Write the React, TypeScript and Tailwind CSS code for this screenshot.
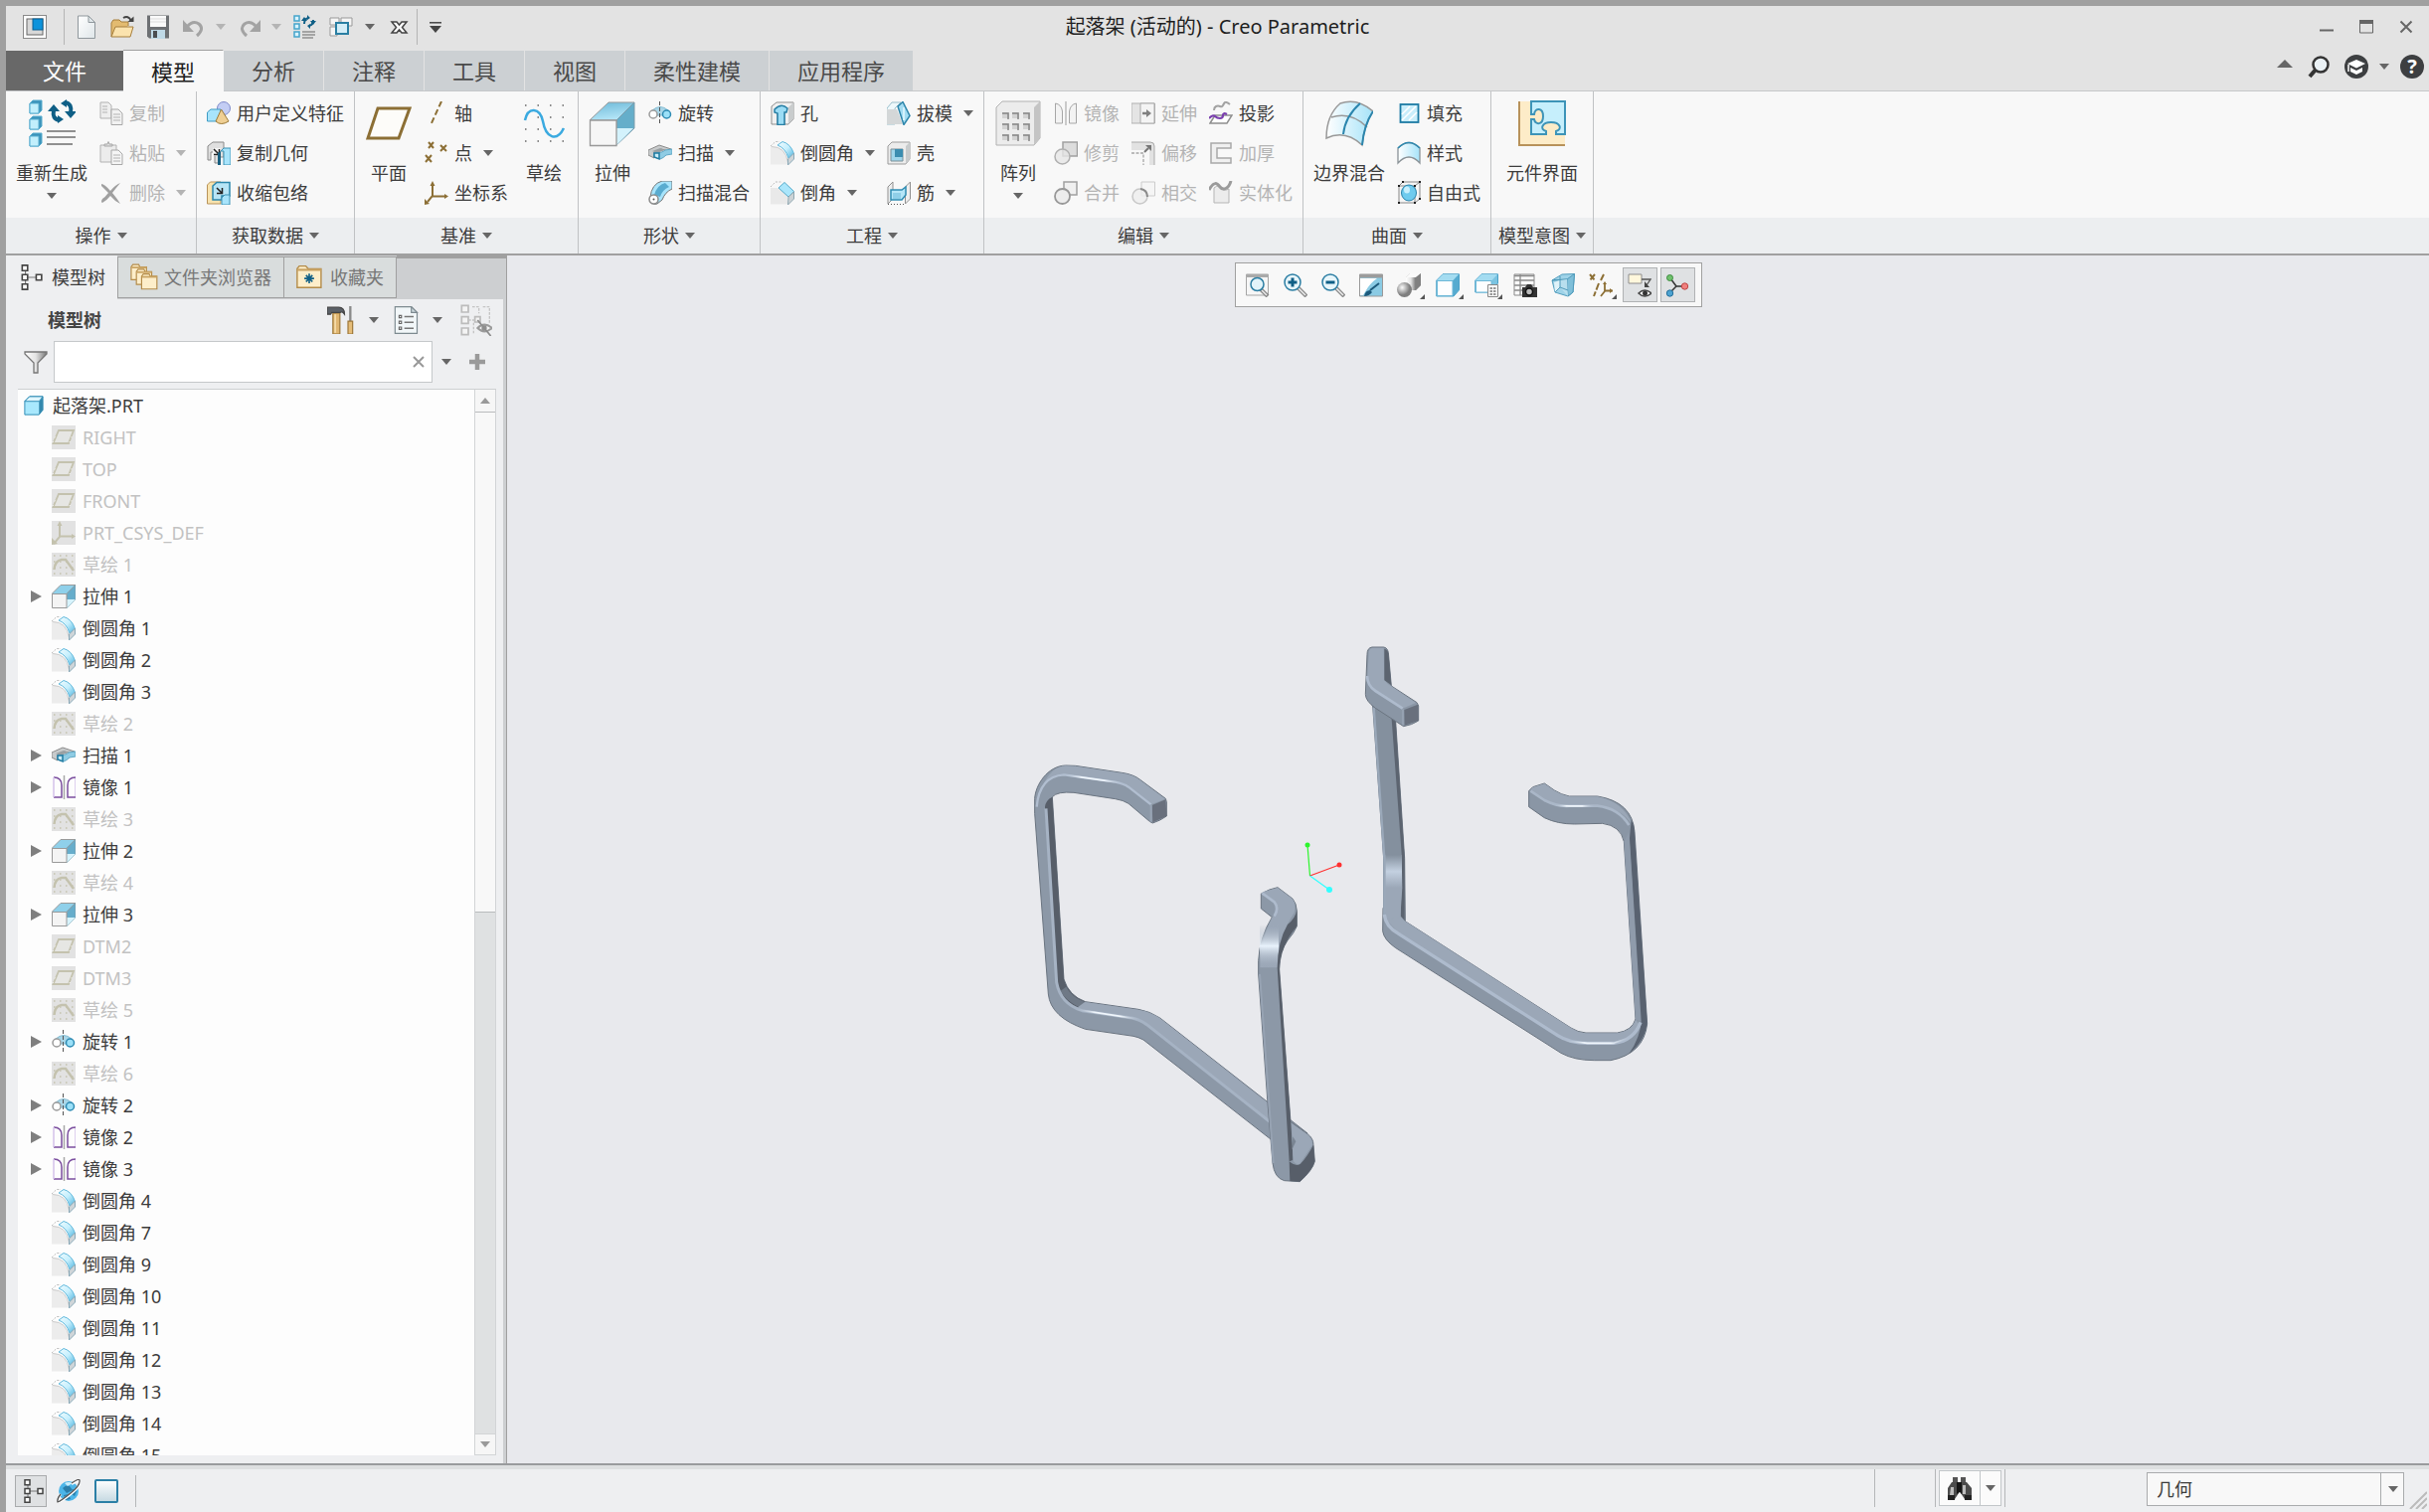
import type { ReactNode } from "react";

const cyan = "#a8e4fb";
const blue = "#3f9cc4";
const teal = "#0f5f86";
const brown = "#8c6f35";
const gray = "#b2b2b2";

const smallIcons: Record<string, ReactNode> = {
  app: (
    <>
      <rect x="0.5" y="0.5" width="23" height="23" fill="#fff" stroke="#8a8a8a" />
      <rect x="4" y="4" width="16" height="16" fill="#d8d8d8" stroke="#666" />
      <rect x="10" y="4" width="10" height="11" fill="#0c93dc" stroke="#0a5f91" />
    </>
  ),
  newFile: (
    <>
      <path d="M3.5 1H14l6.500 6.500V23.500H3.500z" fill="url(#paper)" stroke="#8f979c" />
      <path d="M14 1v6.500h6.500z" fill="#dfe6e9" stroke="#8f979c" />
    </>
  ),
  open: (
    <>
      <path d="M1 22V8l2-3h6l2 2h7v4" fill="#e3bb70" stroke="#a67e3c" />
      <path d="M1 22 5 12h18l-3 10z" fill="#fbe3ae" stroke="#a67e3c" />
      <path d="M13 3q5-3 8 3" fill="none" stroke="#444" strokeWidth="2" />
      <path d="M17.500 7h6V1.500z" fill="#444" />
    </>
  ),
  save: (
    <>
      <path d="M1 .5h22v23H3l-2-2z" fill="#6d7073" />
      <rect x="4" y="1" width="16" height="11" fill="#fafafa" />
      <path d="M4 4h16M4 7h16" stroke="#ddd" />
      <rect x="5" y="15" width="14" height="9" fill="#bfd9e6" />
      <rect x="7" y="16" width="4" height="7" fill="#4a4d50" />
    </>
  ),
  undo: (
    <>
      <path d="M5 12q6-7 12-3 6 5-2 12" fill="none" stroke="#a3a3a3" strokeWidth="3" />
      <path d="M1 5v12h11z" fill="#a3a3a3" />
    </>
  ),
  redo: (
    <>
      <path d="M19 12q-6-7-12-3-6 5 2 12" fill="none" stroke="#a3a3a3" strokeWidth="3" />
      <path d="M23 5v12H12z" fill="#a3a3a3" />
    </>
  ),
  regen: (
    <>
      {[1, 9, 17].map((y) => (
        <rect key={y} x="1" y={y} width="5" height="5" fill="#d9f3fd" stroke="#45a5cb" strokeWidth="1.5" />
      ))}
      <path d="M11 9q0-5 4-6M20 5q0 5-4 6" fill="none" stroke={teal} strokeWidth="2" />
      <path d="M8 6h6l-3-4zM17 6h6l-3 4zM14 0v5l3-2zM17 9v5l-3-3z" fill={teal} />
      <path d="M9 17h13M9 20h13M9 23h11" stroke="#909090" strokeWidth="1.5" />
    </>
  ),
  windows: (
    <>
      <path d="M1 3h9v7H1zM12 3h11v8H12zM1 12h7v9H1z" fill="#f5f5f5" stroke="#999" />
      <rect x="7" y="8" width="12" height="11" fill="#d5eef8" stroke="#2a7fa3" strokeWidth="2" />
    </>
  ),
  closeWin: (
    <path d="M5 7h5l2.500 3L15 7h5l-4.500 5.500L20 18h-5l-2.500-3-2.500 3H5l4.500-5.500z" fill="#fafafa" stroke="#444" strokeWidth="1.5" />
  ),
  copy: (
    <>
      <path d="M1 1h8l3 3v13H1z" fill="#eee" stroke={gray} />
      <path d="M3 5h5M3 8h5M3 11h5" stroke={gray} />
      <path d="M12 8h7l4 4v11.500H12z" fill="#f2f2f2" stroke="#a8a8a8" />
      <path d="M14 13h7M14 16h7M14 19h7" stroke={gray} />
    </>
  ),
  paste: (
    <>
      <path d="M1 4h16v17H1z" fill="#ececec" stroke={gray} />
      <path d="M5 5V3h3l1-2.500L10 3h3v2z" fill="#ddd" stroke="#a8a8a8" />
      <path d="M12 9h7l4 4v10.500H12z" fill="#f5f5f5" stroke="#a8a8a8" />
      <path d="M14 14h7M14 17h7M14 20h7" stroke={gray} />
    </>
  ),
  remove: (
    <path d="M2 3Q5 3 11 10 16 4 21 2 16 8 13 12 18 18 21 23 15 20 11 15 7 20 3 22 1 21 3 18 6 16 9 12 5 8 2 5z" fill="#a0a0a0" />
  ),
  udf: (
    <>
      <circle cx="17" cy="7" r="6.5" fill="#c3cdf4" stroke="#7f8bc9" />
      <path d="M.5 11 4 8h10v12H.5z" fill={cyan} stroke={blue} />
      <path d="M14.500 8 9 20q5 5 13 0z" fill="#efcf94" stroke="#9c7a38" />
    </>
  ),
  copyGeom: (
    <>
      <path d="m1 5 5-4h11v15H12v6H8V11H4v8H1z" fill="#e0e0e0" stroke="#8a8a8a" />
      <path d="M6 7h8v8H6z" fill="#f4f4f4" />
      <path d="m7 8 5 5m.5-5v5.500H7" stroke="#222" strokeWidth="1.5" fill="none" />
      <path d="m11 12 3-2v14h-3z" fill="#185f80" />
      <path d="m14 10 3-3h7v17H17V10z" fill={cyan} stroke="#3c92b5" />
    </>
  ),
  shrink: (
    <>
      <path d="m.5 4 3-3H14v22H.5z" fill="#f8e3ae" stroke="#b8935a" />
      <path d="m6 5 4-3.500h13V15h-8v4H6z" fill="#b7e5f6" stroke="#2b87ac" strokeWidth="1.5" />
      <path d="m10 7 5 5m.5-5v5.500H10" stroke="#222" strokeWidth="1.5" fill="none" />
      <path d="m15 17 3-3h5v10h-8z" fill={cyan} stroke="#3c92b5" />
    </>
  ),
  axis: <path d="M17 0 6 24" stroke={brown} strokeWidth="2" strokeDasharray="6 3" />,
  points: <path d="m4 1 5 6m0-6L4 7m12-3 6 6m0-6-6 6M1 14l6 7m0-7-6 7" stroke={brown} strokeWidth="2" />,
  csys: (
    <>
      <path d="M8 4v11L3 21M8 15.500h13" stroke={brown} strokeWidth="2" fill="none" />
      <path d="M5.500 5h5L8 0zM20 13v5l4-2.500zM0 24v-6l5 5z" fill={brown} />
    </>
  ),
  revolve: (
    <>
      <path d="M4 9Q12 2 20 9v5H4z" fill="#a9d6e8" stroke="#84bcd3" />
      <circle cx="5" cy="13" r="4" fill="#fff" stroke="#9a9a9a" strokeWidth="1.5" />
      <circle cx="18.5" cy="13" r="4" fill="#9be0f8" stroke="#2e8bb3" strokeWidth="1.5" />
      <path d="M11.500 0v24" stroke="#555" strokeDasharray="4 2" />
    </>
  ),
  sweep: (
    <>
      <path d="M0 9 11 4l12 4-2 2-8-2-7 3v6l-6-3z" fill="#c8cbcc" stroke="#8b8b8b" />
      <path d="m4 10 8-3 5 2-8 3z" fill="#9aa0a3" />
      <path d="M6 12q8 0 11-3l7-1v5l-6 1q-3 3-6 4l-6-2z" fill="#8fcce4" stroke="#61a8c5" />
      <path d="M6 12h5v6L6 16z" fill="#c9ecf8" stroke="#1f7ba1" strokeWidth="1.5" />
    </>
  ),
  blend: (
    <>
      <path d="M2 17Q3 3 14 0h10v8q-7 3-10 11l-5 4q-6 2-7-6z" fill={cyan} stroke="#777" />
      <path d="M6 14Q9 4 17 2l4 4Q14 9 12 16z" fill="#59acd0" />
      <circle cx="5.5" cy="18.5" r="4.5" fill="#fff" stroke="#8c8c8c" strokeWidth="1.5" />
      <circle cx="5.5" cy="18.5" r="1" fill="#555" />
    </>
  ),
  hole: (
    <>
      <path d="m1 5 5-4h17v17l-5 5h-4V11H7v12H1z" fill="#f0f0f0" stroke="#8f8f8f" />
      <path d="M18 6v17l5-5V1z" fill="#c9cccd" />
      <path d="M4 8q7-7 13-1l-1 4h-2v12.500H7V12L4 11z" fill="#9bdcf5" stroke="#277fa5" strokeWidth="1.5" />
    </>
  ),
  round: (
    <>
      <path d="M0 5h2q13 2 16 18.500H0z" fill="#ececec" />
      <path d="M0 5 5 .5h4" fill="none" stroke="#bbb" strokeDasharray="2 1.5" />
      <path d="M1 5.500q14 0 16.500 16" fill="none" stroke="#ccc" />
      <path d="M7 4 12 .5q8 2 11.500 12L18 17Q15 7 7 4z" fill="url(#sheen)" stroke="#62b9dc" />
      <path d="m17.500 18 6-6v6l-6 6z" fill="#cfd5d8" stroke="#8aa9b8" />
    </>
  ),
  chamfer: (
    <>
      <path d="M0 7h9l8 8v8.500H0z" fill="#e9e9e9" />
      <path d="M0 6 5 1h7" fill="none" stroke="#bbb" strokeDasharray="2 1.5" />
      <path d="m8 7 6-5.500 9.500 9L18 16z" fill="#abe6fb" stroke="#55aaca" />
      <path d="m18 16 5.500-5v7l-6 6z" fill="#cdd3d6" stroke="#8fa7b1" />
    </>
  ),
  draft: (
    <>
      <path d="M0 7 5 1h9L8 7v16H0z" fill="#eef8fb" stroke="#9abfcc" />
      <path d="M0 8h10l6 15H0z" fill="#d4d7d8" />
      <path d="M11 5 16 .5l7 14-6 9z" fill="#a3dcf2" stroke="#2e86ab" strokeWidth="1.5" />
      <path d="M17 6v13" stroke="#d4f2fc" strokeWidth="2" />
    </>
  ),
  shell: (
    <>
      <path d="m1 5 4-4h18v17l-4 5H1z" fill="#ececec" stroke="#9b9b9b" />
      <path d="M19 5v18l4-5V1z" fill="#c8cbcc" />
      <path d="M4 8h12v12H4z" fill="#9fd5ea" stroke="#7b8f98" />
      <path d="M8 8h8v8H8z" fill="#3a8db0" />
    </>
  ),
  rib: (
    <>
      <path d="m1 6 5-5v17l-5 5zM23.500 1l-5 5v17l5-5z" fill="#eee" stroke="#909090" />
      <path d="M1 23.500h17" stroke="#555" strokeDasharray="1 2" />
      <path d="M4 9h11l4-3v8l-4 5H4z" fill="#b5e6f8" stroke="#308db3" strokeWidth="1.5" />
      <path d="M6 12h8v6H6z" fill="#8fcfe8" />
    </>
  ),
  mirrorOff: (
    <>
      <path d="M12 0v24" stroke="#bbb" strokeWidth="1.5" />
      <path d="M1.500 2q6 1 7 8v12h-7zM22.500 2q-6 1-7 8v12h7z" fill="#f3f3f3" stroke="#a6a6a6" />
    </>
  ),
  mirror: (
    <>
      <path d="M12.500 0v24" stroke="#a8a8a8" strokeWidth="1.5" />
      <path d="M2 2q8 0 8 8v12H2" fill="none" stroke="#7b4e9e" strokeWidth="1.5" />
      <path d="M2 2v20M24 2v20" stroke="#d3c2ea" strokeWidth="1.5" />
      <path d="M24 2q-8 0-8 8v12h8" fill="none" stroke="#7b4e9e" strokeWidth="1.5" />
    </>
  ),
  trim: (
    <>
      <path d="M9 1h14.500v14H9z" fill="#ddd" stroke="#a0a0a0" strokeWidth="1.5" />
      <circle cx="8.5" cy="15.5" r="7.5" fill="#e6e6e6" fillOpacity=".8" stroke="#b0b0b0" strokeWidth="1.5" />
    </>
  ),
  merge: (
    <>
      <path d="M10 1h13v13h-7Q15 9 10 8z" fill="#f0f0f0" stroke="#a0a0a0" strokeWidth="1.5" />
      <circle cx="8.5" cy="15.5" r="7.5" fill="#ededed" stroke="#989898" strokeWidth="1.8" />
    </>
  ),
  intersect: (
    <>
      <path d="M10 1h13.500v14H10z" fill="#f5f5f5" stroke="#ccc" />
      <circle cx="8.5" cy="15.5" r="7.5" fill="#eee" fillOpacity=".8" stroke="#c8c8c8" strokeWidth="1.5" />
      <path d="M9 8q7 1 7 8" fill="none" stroke="#8a8a8a" strokeWidth="2" />
    </>
  ),
  extend: (
    <>
      <path d="M0 2h23.500v20H0z" fill="#e4e4e4" stroke="#b0b0b0" />
      <path d="M9 2h14v20H9z" fill="#f4f4f4" stroke="#aaa" />
      <path d="M11 12h6" stroke="#808080" strokeWidth="2.5" />
      <path d="m15 8 5 4-5 4z" fill="#808080" />
    </>
  ),
  offset: (
    <>
      <path d="M0 1h20q3 0 3 3v20h-5V9H0z" fill="#e2e2e2" />
      <path d="M0 1h19q4 0 4 4v19" fill="none" stroke="#aaa" />
      <path d="M0 12h12v12" fill="none" stroke="#a5a5a5" strokeWidth="1.3" strokeDasharray="3 1.5" />
      <path d="m13 11 4-4" stroke="#777" strokeWidth="2" />
      <path d="M14 4h6v6z" fill="#777" />
    </>
  ),
  project: (
    <>
      <path d="M5 9q0-3 2-4t4 0 3-1 2-3 5 2" fill="none" stroke="#a3a3a3" strokeWidth="2" />
      <path d="m1 22 5-8h17l-5 8z" fill="#fff" stroke="#8f8f8f" strokeWidth="1.5" />
      <path d="M0 17q4-4 6-2t5 2 3-3 4-1" fill="none" stroke="#7a3fae" strokeWidth="2.2" />
    </>
  ),
  thicken: <path d="M2 2h20v5H8v10h14v5H2z" fill="#f0f0f0" stroke="#a8a8a8" strokeWidth="1.5" />,
  solidify: (
    <>
      <path d="M5 7q5-4 7 0t8 1v14H5z" fill="#ececec" stroke="#b5b5b5" />
      <path d="M0 9C5 0 8 2 11 6S20 8 22 0" fill="none" stroke="#9b9b9b" strokeWidth="3" />
    </>
  ),
  fill: (
    <>
      <rect x="3.5" y="3" width="18" height="18" fill="#c9eefb" stroke="#1d7ba4" strokeWidth="1.8" />
      <path d="m5 13 8-8M5 19 19 5M12 19l8-8" stroke="#fff" strokeWidth="1.5" />
    </>
  ),
  style: (
    <>
      <path d="M1 7Q12-4 23 7v15Q12 10 1 22z" fill="url(#sheenH)" stroke="#8a9297" strokeWidth="1.3" />
      <path d="M1 7Q12-4 23 7" fill="none" stroke="#2b89b1" strokeWidth="1.5" />
    </>
  ),
  freestyle: (
    <>
      <path d="M2 5h16v17H2zM2 5l4-4h17l-5 4M23 1v17l-5 4" fill="#f5f5f5" stroke="#888" />
      <ellipse cx="12" cy="12" rx="7.5" ry="8" fill="#6fcbee" stroke="#2a83ab" />
      <ellipse cx="10" cy="9" rx="3" ry="3.5" fill="#c8effc" />
      <path d="M1 4h2v2H1zM17 4h2v2h-2zM5 0h2v2H5zM22 0h2v2h-2zM1 21h2v2H1zM17 21h2v2h-2zM22 17h2v2h-2z" fill="#222" />
    </>
  ),
  modelTree: (
    <>
      <path d="M7 5v14M7 12h10" stroke="#777" />
      <path d="M4 .8h5v5H4zM4 9.500h5v5H4zM4 18.200h5v5H4zM17 9.500h5v5h-5z" fill="#fff" stroke="#444" strokeWidth="1.5" />
    </>
  ),
  part: (
    <>
      <path d="m3 7 5-5h14v14l-4 5H3z" fill="#a8e8fd" stroke="#2f8cb5" />
      <path d="M18 7 22 2v14l-4 5z" fill="#3489ae" />
      <path d="m3 7 5-5h14l-4 5z" fill="#e0f6fd" stroke="#2f8cb5" />
    </>
  ),
  extrude: (
    <>
      <path d="M0 9.500 9 .5h15L15 9.500z" fill="#8fd0ea" stroke="#9a9a9a" />
      <path d="m15 9.500 9-9V15l-9 9z" fill="#66adcb" stroke="#7b9cab" />
      <path d="m15 24 9-9h-9z" fill="#d6f3fc" />
      <path d="M.5 9.500h14.500v14H.5z" fill="#f4f4f4" stroke="#9a9a9a" />
    </>
  ),
  plane: (
    <>
      <path d="M0 0h24v24H0z" fill="#e2e2e2" />
      <path d="M7 5h15l-5 13H1.500z" fill="#e6e6e3" stroke="#c4c2ae" strokeWidth="1.8" />
      <path d="M1 17l4-9M18 17l3-8" stroke="#fff" strokeDasharray="1 4" />
    </>
  ),
  csysOff: (
    <>
      <path d="M0 0h24v24H0z" fill="#e2e2e2" />
      <path d="M8 3v13l-6 7M8 15.500h14" stroke="#c4c2ae" strokeWidth="2" fill="none" />
      <path d="M5.500 5h5L8 0zM20 13v5l4-2.500zM0 24v-7l6 6z" fill="#c4c2ae" />
    </>
  ),
  sketchOff: (
    <>
      <path d="M0 0h24v24H0z" fill="#e2e2e2" />
      {[3, 9, 15, 21].map((y) => (
        <path key={y} d={`M2 ${y}h21`} stroke="#c4c2ae" strokeWidth="1.5" strokeDasharray="1.5 4.5" />
      ))}
      <path d="M2.500 17Q3 8 10 7h4l8 11" fill="none" stroke="#c4c2ae" strokeWidth="2.5" />
    </>
  ),
  funnel: <path d="M1 2h22v2l-9 9v10h-4V13L1 4z" fill="url(#metal)" stroke="#777" strokeWidth="1.3" />,
  globe: (
    <>
      <circle cx="12" cy="12" r="10" fill="#4cb5e8" />
      <path d="M6 9q4-4 7-2l3 4-6 3zM7 16l5-1 2 5-5 1zM16 10l4 2-2 5-3-2z" fill="#2b7fab" />
      <path d="M8 4q4-2 8 0l-5 3z" fill="#c9ecf9" />
      <path d="M15 5q7-5 8-3 1 5-9 13T1 23q-1-3 3-8" fill="none" stroke="#fff" strokeWidth="2.5" />
      <path d="M15 4q7-5 8-3 1 5-9 13T1 23q-1-3 3-8" fill="none" stroke="#555" strokeWidth="1.3" />
    </>
  ),
  pane: <rect x="1" y="1" width="22" height="22" rx="1" fill="url(#paneFill)" stroke="#2b7fa6" strokeWidth="2" />,
  binoculars: (
    <>
      <path d="M5 1h5v5H5zM13 1h5v5h-5z" fill="#555" />
      <path d="M4 6h7v11L7 23H0V12zM12 6h7l5 6v11h-7l-4-6z" fill="#4c4c4c" />
      <path d="M3 11h3v8H2zM15 9h3v9h-3z" fill="#bdbdbd" />
      <path d="M9 6h5v12l-2-2-3 2z" fill="#151515" />
      <path d="M0 19h7v5H0zM17 19h7v5h-7z" fill="#222" />
    </>
  ),
  zoomFit: (
    <>
      <path d="M.5 1h22v21H.5z" fill="#f6f6f6" stroke="#a5a5a5" />
      <path d="M0 1h23v3H0z" fill="#aaa" />
      <path d="m15 16 7 7" stroke="#888" strokeWidth="4" />
      <path d="m16 17 5 5" stroke="#eee" strokeWidth="1.5" />
      <circle cx="11.5" cy="11" r="6.5" fill="#e3f4fa" stroke="#2c7ea3" strokeWidth="1.5" />
    </>
  ),
  zoomIn: (
    <>
      <path d="m14 14 9 9" stroke="#8a8a8a" strokeWidth="4" />
      <path d="m15 15 7 7" stroke="#eee" strokeWidth="1.5" />
      <circle cx="9" cy="9" r="8" fill="#e8f6fb" stroke="#2c7ea3" strokeWidth="1.5" />
      <path d="M9 4.500v9M4.500 9h9" stroke={teal} strokeWidth="3" />
    </>
  ),
  zoomOut: (
    <>
      <path d="m14 14 9 9" stroke="#8a8a8a" strokeWidth="4" />
      <path d="m15 15 7 7" stroke="#eee" strokeWidth="1.5" />
      <circle cx="9" cy="9" r="8" fill="#e8f6fb" stroke="#2c7ea3" strokeWidth="1.5" />
      <path d="M4.500 9h9" stroke={teal} strokeWidth="3" />
    </>
  ),
  repaint: (
    <>
      <path d="M.5 1h23v22H.5z" fill="#8bcbe4" stroke="#999" />
      <path d="M1 5h17Q11 10 7 17L4 22H1z" fill="#fff" />
      <path d="M0 1h24v3.500H0z" fill="#9c9c9c" />
      <path d="m11 17 9-7" stroke="#1c5a7c" strokeWidth="2" />
      <path d="M5 23q1-6 6-6l2 2q-3 4-8 4z" fill="#1c5a7c" />
    </>
  ),
  shading: (
    <>
      <path d="m9 4 4-4h11v12l-5 5h-9z" fill="#b5b5b5" />
      <path d="m9 4 4-4h11l-5 4z" fill="#fafafa" />
      <path d="M9 4h10v13H9z" fill="url(#metal)" />
      <path d="m19 4 5-4v12l-5 5z" fill="#808080" />
      <circle cx="7.5" cy="16.5" r="7.5" fill="url(#ball)" />
    </>
  ),
  saved: (
    <>
      <path d="M.8 7 7 .8h16.500v16L18 23H.8z" fill="#56abd0" stroke="#4ba2c8" />
      <path d="M1 7 7 1h16l-5.500 6z" fill="#a4dcf1" />
      <path d="M1.500 7.500H17v15H1.500z" fill="#fdfeff" stroke="#6cb8d8" />
    </>
  ),
  viewMgr: (
    <>
      <path d="M.8 7 7 .8h16.500V10L18 16v3H.8z" fill="#7cc4e1" stroke="#4ba2c8" />
      <path d="M1 7 7 1h16l-5.500 6z" fill="#a4dcf1" />
      <path d="M1.500 7.500H17v11.500H1.500z" fill="#fdfeff" stroke="#6cb8d8" />
      <path d="M13.500 11.500h10v12h-10z" fill="#fafafa" stroke="#888" />
      <path d="M15.500 15h2.500m1 0h2.500m-6 3h2.500m1 0h2.500m-6 3h2.500m1 0h2.500" stroke="#777" strokeWidth="1.3" />
    </>
  ),
  snapshot: (
    <>
      <path d="M1 1h20v21H1z" fill="#fafafa" stroke="#8a8a8a" />
      <path d="M1 2.500h20M1 7h20M1 12h20M1 17h20M7 1v21" stroke="#8a8a8a" strokeWidth="1.3" />
      <path d="M9 14h3l2-3h4l2 3h4v10H9z" fill="#333" />
      <circle cx="16" cy="18.5" r="3.5" fill="#bbb" stroke="#111" strokeWidth="1.5" />
    </>
  ),
  perspective: (
    <>
      <path d="M1 7 11 1l12.500-.5L22 19 17 23 4 19z" fill="#9fd3e8" stroke="#559fbf" />
      <path d="m1 7 15-1 7.500-5.500L22 19l-5 4-1-17z" fill="#7fbfd9" stroke="#4f9aba" />
      <path d="M3 9l6-2v7l-5 5z" fill="#dff2f9" />
      <path d="m9 7 7-1 1 17-8-9z" fill="#b8dfee" />
      <path d="M9 3v11l-5 5M9 14l8 3" stroke="#4f9aba" fill="none" />
    </>
  ),
  datums: (
    <>
      <path d="m1 1 5 6m0-6L1 7M15 1l-3 6M10 10l-5 13" stroke={brown} strokeWidth="2" strokeDasharray="7 2" />
      <path d="M16 10v8l-4 5M16 17.500h8" stroke={brown} strokeWidth="1.8" fill="none" />
      <path d="M14 11h4l-2-3zM21 15v5l3-2.500z" fill={brown} />
    </>
  ),
  annot: (
    <>
      <path d="M1 1h13v9H1z" fill="#fff7dc" stroke="#8e8e8e" />
      <path d="M14 6h9l-4 6" fill="none" stroke="#555" strokeWidth="1.3" />
      <path d="M17 8v6h5z" fill="#444" />
      <path d="M11 20q6-6 13 0-7 6-13 0z" fill="#fff" stroke="#444" strokeWidth="1.5" />
      <circle cx="17.5" cy="20" r="2.5" fill="#333" />
    </>
  ),
  spin: (
    <>
      <path d="m5 5 6 8-7 7M11 13h8" stroke="#333" strokeWidth="1.5" fill="none" />
      <circle cx="4.5" cy="4.5" r="3" fill="#70c16d" stroke="#3c8a3e" />
      <circle cx="4.5" cy="20" r="3.2" fill="#4da3d1" stroke="#236f9a" />
      <circle cx="19.5" cy="13" r="3.2" fill="#f0807e" stroke="#bf4645" />
    </>
  ),
  folders: (
    <>
      {[0, 4.5, 9].map((d) => (
        <g key={d} transform={`translate(${d} ${d * 0.9})`}>
          <path d="M.8 14V3l1.500-2h5l1 2H14v11z" fill="#fdeeca" stroke="#b48c4a" />
          <path d="M1 3.500h13" stroke="#c9a362" strokeWidth="1.5" />
        </g>
      ))}
    </>
  ),
  favorite: (
    <>
      <path d="M.8 21.500V4l2-2.500h6L11 4h12v17.500z" fill="#fdeeca" stroke="#b48c4a" strokeWidth="1.3" />
      <path d="M1 5h22" stroke="#c9a362" strokeWidth="2" />
      <path d="M12 8.500v9M7.500 13h9M9 10l6 6m0-6-6 6" stroke={teal} strokeWidth="1.5" />
    </>
  ),
  tools: (
    <>
      <path d="M5 6h6v18H5z" fill="#e0b671" stroke="#9c7637" />
      <path d="M7 7v16" stroke="#f5dba8" strokeWidth="1.5" />
      <path d="M0 1h10q5 0 5 6-2-3-4-1.500H4L3 7H0z" fill="#5b6067" stroke="#444" />
      <path d="M20 0v13" stroke="#8a8a8a" strokeWidth="2" />
      <path d="M18 13h4v11h-4z" fill="#e5bd79" stroke="#9c7637" />
    </>
  ),
  listDoc: (
    <>
      <path d="M2 .5h14l5 5v18H2z" fill="#f2f7f9" stroke="#7d8a90" />
      <path d="M16 .5v5h5z" fill="#cdd9de" stroke="#7d8a90" />
      <path d="M10 9h8M10 14h8M10 19h8" stroke="#777" strokeWidth="1.3" />
      <path d="M5.500 8h2v2h-2zM5.500 13h2v2h-2zM5.500 18h2v2h-2z" fill="#fff" stroke="#666" />
    </>
  ),
  treeHide: (
    <>
      <path d="M1 1h5v5H1zM1 9.500h5v5H1zM1 18h5v5H1zM11 9.500h4v4h-4z" fill="#f4f4f4" stroke="#bcbcbc" strokeWidth="1.3" />
      <path d="M6 12h5M9 2h5v5M17 2h5v12M10 14v8" stroke="#c4c4c4" fill="none" strokeDasharray="2 1" />
      <path d="M13 18q5-5 11 0-6 5-11 0z" fill="#f4f4f4" stroke="#9b9b9b" strokeWidth="1.5" />
      <circle cx="18" cy="18" r="2" fill="#909090" />
      <path d="m13 12 10 12" stroke="#8d8d8d" strokeWidth="1.3" />
    </>
  ),
};

const largeIcons: Record<string, ReactNode> = {
  regen: (
    <>
      {[1, 17, 34].map((y) => (
        <g key={y}>
          <path d={`M2 ${y + 3}l3-3h9v10l-3 3H2z`} fill="#3b93ba" stroke="#58adcf" />
          <path d={`M2 ${y + 3}h9v10H2z`} fill="#c2effc" stroke="#58adcf" />
        </g>
      ))}
      <path d="M32 21C26 20 25 16 26 11M37 3c6 1 7 5 6 10" fill="none" stroke={teal} strokeWidth="4" />
      <path d="M20 12h12l-6-7zM37 12h12l-6 7zM39 0v8l-6-4zM30 16v8l6-4z" fill={teal} />
      <path d="M19 32h29M19 38h29M19 45h26" stroke="#909090" strokeWidth="2" />
    </>
  ),
  plane: <path d="M13 9h32L34 39H3z" fill="#fdfcf9" stroke={brown} strokeWidth="3" />,
  sketch: (
    <>
      {[6, 18, 30, 42].map((y) => (
        <path key={y} d={`M5 ${y}h40`} stroke="#666" strokeWidth="1.5" strokeDasharray="1.5 11" />
      ))}
      <path d="M5 21C8 7 20 8 23 22c3 17 14 21 21 7" fill="none" stroke="#3baae0" strokeWidth="2.5" />
    </>
  ),
  extrude: (
    <>
      <path d="M1 21 20 3h26L29 21z" fill="url(#extrudeTop)" stroke="#999" />
      <path d="M28 21 46 3v26L28 46z" fill="#65aeca" stroke="#7c9cab" />
      <path d="m28 46 17-17H28z" fill="#d3f2fc" />
      <path d="M1.500 21H28v25.500H1.500z" fill="#f6f6f6" stroke="#999" strokeWidth="1.3" />
    </>
  ),
  pattern: (
    <>
      <path d="m2 8 6-6h38v37l-6 7H2z" fill="#ececec" stroke={gray} />
      <path d="m40 8 6-6v37l-6 7z" fill="#c4c4c4" />
      {[13, 24, 35].map((y) =>
        [8, 18, 29].map((x) => (
          <g key={`${x}-${y}`}>
            <rect x={x} y={y} width="7" height="6" fill="#d2d2d2" />
            <path d={`M${x} ${y + 1}h6v6`} stroke="#858585" strokeWidth="1.5" fill="none" />
          </g>
        )),
      )}
    </>
  ),
  boundary: (
    <>
      <path d="M15 4Q32-2 48 12 39 25 37 46 20 30 1 39 1 16 15 4z" fill="url(#sheenH)" stroke="#999" strokeWidth="1.5" />
      <path d="M6 18q20-6 36 10" fill="none" stroke="#999" strokeWidth="1.5" />
      <path d="M35 4Q20 17 18 35M48 12Q39 25 37 46" fill="none" stroke="#2b86ae" strokeWidth="2" />
    </>
  ),
  puzzle: (
    <>
      <path d="M1 2h46v44H1z" fill="#fdecc8" />
      <path d="M13 2v13h3c1-7 9-7 9 2s-8 9-9 3h-3v15h15v-3c-7-2-4-9 5-9s12 7 5 9v3h9V2z" fill="#c6effc" stroke="#3d94b8" strokeWidth="2" />
      <path d="M1 2v44h46" fill="none" stroke="#b8925a" strokeWidth="2" />
    </>
  ),
};

const Icon = ({ name, className = "size-6" }: { name: string; className?: string }) => (
  <svg viewBox="0 0 24 24" className={`${className} shrink-0`} aria-hidden="true">
    {smallIcons[name]}
  </svg>
);

const Caret = ({ className = "text-[#666]" }: { className?: string }) => (
  <svg viewBox="0 0 10 6" className={`h-[6px] w-[10px] shrink-0 ${className}`} aria-hidden="true">
    <path d="M0 0h10L5 6z" fill="currentColor" />
  </svg>
);

const Gradients = () => (
  <svg className="absolute size-0" aria-hidden="true">
    <defs>
      <linearGradient id="paper" x2="1" y2="1">
        <stop stopColor="#fff" />
        <stop offset="1" stopColor="#dfe6e9" />
      </linearGradient>
      <linearGradient id="sheen" x2="1" y2="1">
        <stop stopColor="#f2fcff" />
        <stop offset=".5" stopColor="#c5effd" />
        <stop offset="1" stopColor="#4fb4de" />
      </linearGradient>
      <linearGradient id="sheenH">
        <stop stopColor="#fff" />
        <stop offset="1" stopColor="#a6e3f9" />
      </linearGradient>
      <linearGradient id="metal">
        <stop stopColor="#fff" />
        <stop offset=".5" stopColor="#e4e4e4" />
        <stop offset="1" stopColor="#777" />
      </linearGradient>
      <radialGradient id="ball" cx=".35" cy=".35">
        <stop stopColor="#fafafa" />
        <stop offset="1" stopColor="#7f7f7f" />
      </radialGradient>
      <linearGradient id="paneFill" x2="0" y2="1">
        <stop stopColor="#fff" />
        <stop offset="1" stopColor="#c4d8e1" />
      </linearGradient>
      <linearGradient id="extrudeTop" x2="0.3" y2="1">
        <stop stopColor="#6db9d8" />
        <stop offset="1" stopColor="#b3e5f7" />
      </linearGradient>
      <linearGradient id="shine" x2="0" y2="1">
        <stop stopColor="#9ba7b7" stopOpacity="0" />
        <stop offset=".5" stopColor="#e8f2fc" />
        <stop offset="1" stopColor="#9ba7b7" stopOpacity="0" />
      </linearGradient>
      <linearGradient id="shineH">
        <stop stopColor="#b5c2d3" stopOpacity="0" />
        <stop offset=".3" stopColor="#f0f6fc" />
        <stop offset=".7" stopColor="#f0f6fc" />
        <stop offset="1" stopColor="#b5c2d3" stopOpacity="0" />
      </linearGradient>
      <linearGradient id="postShade" x2="0" y2="1">
        <stop stopColor="#84909e" />
        <stop offset=".5" stopColor="#c3d0e0" />
        <stop offset="1" stopColor="#9ba7b7" />
      </linearGradient>
    </defs>
  </svg>
);

type ItemProps = { icon: string; label: string; menu?: boolean; off?: boolean };

const Item = ({ icon, label, menu, off }: ItemProps) => (
  <button
    disabled={off}
    className={`flex h-6 items-center whitespace-nowrap ${off ? "text-[#b4b4b4]" : "text-[#3c3c3c]"}`}
  >
    <Icon name={icon} />
    <span className="ml-[6px]">{label}</span>
    {menu && (
      <span className="ml-[11px]">
        <Caret className={off ? "text-[#b4b4b4]" : "text-[#666]"} />
      </span>
    )}
  </button>
);

const Column = ({ items }: { items: ItemProps[] }) => (
  <div className="flex flex-col gap-4 pt-[10px]">
    {items.map((i) => (
      <Item key={i.label} {...i} />
    ))}
  </div>
);

const Large = ({ icon, label, menu }: { icon: string; label: string; menu?: boolean }) => (
  <button className="flex min-w-12 flex-col items-center self-start pt-2 whitespace-nowrap text-[#3c3c3c]">
    <svg viewBox="0 0 48 48" className="size-12" aria-hidden="true">
      {largeIcons[icon]}
    </svg>
    <span className="mt-[14px] leading-6">{label}</span>
    {menu && (
      <span className="mt-2 flex">
        <Caret />
      </span>
    )}
  </button>
);

const Group = ({ title, children }: { title: string; children: ReactNode }) => (
  <section className="flex flex-col border-r border-[#c0c2c4]">
    <div className="flex h-[127px] justify-center gap-3 px-[10px]">{children}</div>
    <button className="flex h-9 items-center justify-center gap-[6px] bg-[#eceef0] px-[7px] whitespace-nowrap text-[#3c3c3c]">
      {title}
      <Caret />
    </button>
  </section>
);

const tabs = ["模型", "分析", "注释", "工具", "视图", "柔性建模", "应用程序"];

const TitleBar = () => (
  <header className="grid h-[45px] grid-cols-[1fr_auto_1fr] items-start bg-[#e3e3e3] text-[20px] text-[#1e1e1e]">
    <div className="flex h-[42px] items-center gap-3 pl-[17px]">
      <Icon name="app" />
      <span className="mr-[-2px] ml-[5px] h-9 w-px bg-[#b5b5b5]" />
      <Icon name="newFile" />
      <Icon name="open" />
      <Icon name="save" />
      <span className="flex items-center gap-[10px]">
        <Icon name="undo" />
        <Caret className="text-[#b4b4b4]" />
      </span>
      <span className="flex items-center gap-[10px]">
        <Icon name="redo" />
        <Caret className="text-[#b4b4b4]" />
      </span>
      <Icon name="regen" />
      <span className="flex items-center gap-3">
        <Icon name="windows" />
        <Caret />
      </span>
      <Icon name="closeWin" />
      <span className="ml-[-6px] h-9 w-px bg-[#b5b5b5]" />
      <svg viewBox="0 0 12 11" className="h-[11px] w-3" aria-hidden="true">
        <path d="M0 .8h12" stroke="#444" strokeWidth="1.5" />
        <path d="M0 4h12l-6 7z" fill="#444" />
      </svg>
    </div>
    <h1 className="flex h-[42px] items-center whitespace-nowrap">起落架 (活动的) - Creo Parametric</h1>
    <div className="flex h-[42px] items-center justify-end gap-[26px] pr-4 text-[#666]">
      <button aria-label="最小化">
        <svg viewBox="0 0 14 14" className="size-[14px]">
          <path d="M0 10.500h14" stroke="currentColor" strokeWidth="2" />
        </svg>
      </button>
      <button aria-label="最大化">
        <svg viewBox="0 0 14 14" className="size-[14px]">
          <path d="M.5 1h13v12H.5z" fill="none" stroke="currentColor" />
          <path d="M0 0h14v4H0z" fill="currentColor" />
        </svg>
      </button>
      <button aria-label="关闭">
        <svg viewBox="0 0 14 14" className="size-[14px]">
          <path d="m1.500 1.500 11 11m0-11-11 11" stroke="currentColor" strokeWidth="2" />
        </svg>
      </button>
    </div>
  </header>
);

const TabBar = () => (
  <nav className="flex h-[41px] items-end border-b border-[#c6c8ca] bg-[#e3e3e3] text-[22px] text-[#4a4a4a]">
    <button className="h-10 w-[118px] bg-[#686868] text-white">文件</button>
    {tabs.map((t, i) =>
      i === 0 ? (
        <button key={t} className="mb-[-1px] h-[42px] border-t border-r border-t-[#a0a0a0] border-r-[#f8f8f8] bg-[#f8f8f8] px-7 text-[#1e1e1e]">
          {t}
        </button>
      ) : (
        <button key={t} className="h-10 border-r border-[#e3e3e3] bg-[#ccd0d3] px-7">
          {t}
        </button>
      ),
    )}
    <div className="ml-auto flex h-12 items-center gap-[14px] pr-[5px]">
      <svg viewBox="0 0 16 8" className="mb-[6px] h-2 w-4" aria-hidden="true">
        <path d="m0 8 8-8 8 8z" fill="#666" />
      </svg>
      <svg viewBox="0 0 24 24" className="size-6" aria-hidden="true">
        <path d="m3 22 6-7" stroke="#333" strokeWidth="4" />
        <circle cx="14" cy="10" r="7.5" fill="#eaf1f5" stroke="#333" strokeWidth="2.5" />
      </svg>
      <span className="flex items-center gap-[11px]">
        <svg viewBox="0 0 24 24" className="size-6" aria-hidden="true">
          <circle cx="12" cy="12" r="12" fill="#3d3f41" />
          <path d="m12 5 9 4-9 4.500L3 9z" fill="#fff" />
          <path d="M6 13v4l6 3 6-3v-4l-6 3z" fill="#fff" />
          <path d="M4 10v7" stroke="#fff" strokeWidth="1.5" />
        </svg>
        <Caret />
      </span>
      <span className="ml-[-3px] flex size-6 items-center justify-center rounded-full bg-[#3d3f41] text-[20px] leading-6 font-bold text-white">?</span>
    </div>
  </nav>
);

const Ribbon = () => (
  <div className="flex border-b-2 border-[#a0a0a0] bg-[#f8f8f8]">
    <Group title="操作">
      <Large icon="regen" label="重新生成" menu />
      <Column
        items={[
          { icon: "copy", label: "复制", off: true },
          { icon: "paste", label: "粘贴", off: true, menu: true },
          { icon: "remove", label: "删除", off: true, menu: true },
        ]}
      />
    </Group>
    <Group title="获取数据">
      <Column
        items={[
          { icon: "udf", label: "用户定义特征" },
          { icon: "copyGeom", label: "复制几何" },
          { icon: "shrink", label: "收缩包络" },
        ]}
      />
    </Group>
    <Group title="基准">
      <Large icon="plane" label="平面" />
      <Column
        items={[
          { icon: "axis", label: "轴" },
          { icon: "points", label: "点", menu: true },
          { icon: "csys", label: "坐标系" },
        ]}
      />
      <Large icon="sketch" label="草绘" />
    </Group>
    <Group title="形状">
      <Large icon="extrude" label="拉伸" />
      <Column
        items={[
          { icon: "revolve", label: "旋转" },
          { icon: "sweep", label: "扫描", menu: true },
          { icon: "blend", label: "扫描混合" },
        ]}
      />
    </Group>
    <Group title="工程">
      <Column
        items={[
          { icon: "hole", label: "孔" },
          { icon: "round", label: "倒圆角", menu: true },
          { icon: "chamfer", label: "倒角", menu: true },
        ]}
      />
      <Column
        items={[
          { icon: "draft", label: "拔模", menu: true },
          { icon: "shell", label: "壳" },
          { icon: "rib", label: "筋", menu: true },
        ]}
      />
    </Group>
    <Group title="编辑">
      <Large icon="pattern" label="阵列" menu />
      <Column
        items={[
          { icon: "mirrorOff", label: "镜像", off: true },
          { icon: "trim", label: "修剪", off: true },
          { icon: "merge", label: "合并", off: true },
        ]}
      />
      <Column
        items={[
          { icon: "extend", label: "延伸", off: true },
          { icon: "offset", label: "偏移", off: true },
          { icon: "intersect", label: "相交", off: true },
        ]}
      />
      <Column
        items={[
          { icon: "project", label: "投影" },
          { icon: "thicken", label: "加厚", off: true },
          { icon: "solidify", label: "实体化", off: true },
        ]}
      />
    </Group>
    <Group title="曲面">
      <Large icon="boundary" label="边界混合" />
      <Column
        items={[
          { icon: "fill", label: "填充" },
          { icon: "style", label: "样式" },
          { icon: "freestyle", label: "自由式" },
        ]}
      />
    </Group>
    <Group title="模型意图">
      <Large icon="puzzle" label="元件界面" />
    </Group>
    <div className="flex flex-1 flex-col justify-end">
      <div className="h-9 bg-[#eceef0]" />
    </div>
  </div>
);

// [icon, label, expandable]
const features: [string, string, boolean?][] = [
  ["plane", "RIGHT"],
  ["plane", "TOP"],
  ["plane", "FRONT"],
  ["csysOff", "PRT_CSYS_DEF"],
  ["sketchOff", "草绘 1"],
  ["extrude", "拉伸 1", true],
  ["round", "倒圆角 1"],
  ["round", "倒圆角 2"],
  ["round", "倒圆角 3"],
  ["sketchOff", "草绘 2"],
  ["sweep", "扫描 1", true],
  ["mirror", "镜像 1", true],
  ["sketchOff", "草绘 3"],
  ["extrude", "拉伸 2", true],
  ["sketchOff", "草绘 4"],
  ["extrude", "拉伸 3", true],
  ["plane", "DTM2"],
  ["plane", "DTM3"],
  ["sketchOff", "草绘 5"],
  ["revolve", "旋转 1", true],
  ["sketchOff", "草绘 6"],
  ["revolve", "旋转 2", true],
  ["mirror", "镜像 2", true],
  ["mirror", "镜像 3", true],
  ["round", "倒圆角 4"],
  ["round", "倒圆角 7"],
  ["round", "倒圆角 9"],
  ["round", "倒圆角 10"],
  ["round", "倒圆角 11"],
  ["round", "倒圆角 12"],
  ["round", "倒圆角 13"],
  ["round", "倒圆角 14"],
  ["round", "倒圆角 15"],
];

const hiddenIcons = ["plane", "csysOff", "sketchOff"];

const Sidebar = () => (
  <aside className="flex w-[504px] shrink-0 flex-col border-r border-[#a0a0a0] bg-[#eeeff1]">
    <div className="flex h-11 items-start bg-[#cdcfd1]">
      <button className="flex h-11 w-[112px] items-center gap-2 bg-[#eeeff1] pl-3 text-[#3c3c3c]">
        <Icon name="modelTree" className="size-[26px]" />
        模型树
      </button>
      <button className="mt-[1px] flex h-[42px] w-[168px] items-center gap-[6px] border border-[#a0a0a0] bg-[#d9dddd] pl-3 text-[#777]">
        <Icon name="folders" className="size-7" />
        文件夹浏览器
      </button>
      <button className="mt-[1px] flex h-[42px] w-[113px] items-center gap-2 border border-l-0 border-[#a0a0a0] bg-[#d9dddd] pl-3 text-[#777]">
        <Icon name="favorite" className="size-[26px]" />
        收藏夹
      </button>
      <span className="h-[3px] flex-1 bg-[#a0a0a0]" />
    </div>
    <div className="flex min-h-0 flex-1 flex-col border-r-[3px] border-[#cdcfd1] pr-[7px] pb-2 pl-3">
      <div className="flex h-[42px] items-center">
        <h2 className="mr-auto ml-[30px] font-bold text-[#444]">模型树</h2>
        <Icon name="tools" className="mr-[14px] size-7" />
        <Caret />
        <Icon name="listDoc" className="mr-3 ml-[14px] size-7" />
        <Caret />
        <Icon name="treeHide" className="mr-1 ml-[18px] size-8" />
      </div>
      <div className="mb-[6px] flex h-[42px] items-center">
        <Icon name="funnel" className="ml-[6px] size-6" />
        <div className="relative ml-[6px] flex-1">
          <input aria-label="过滤" className="block h-[42px] w-full border border-[#c5c8ca] bg-white pr-8 pl-2 outline-none" />
          <svg viewBox="0 0 12 12" className="absolute top-[15px] right-2 size-3" aria-hidden="true">
            <path d="m1 1 10 10m0-10L1 11" stroke="#999" strokeWidth="2" />
          </svg>
        </div>
        <span className="ml-[9px]">
          <Caret />
        </span>
        <svg viewBox="0 0 16 16" className="mr-[11px] ml-[18px] size-4" aria-hidden="true">
          <path d="M8 0v16M0 8h16" stroke="#9a9a9a" strokeWidth="4.5" />
        </svg>
      </div>
      <div className="flex min-h-0 flex-1 border-t border-[#cdcfd1] bg-[#fdfdfd]">
        <ul className="min-w-0 flex-1 overflow-hidden">
          <li className="flex h-8 items-center pl-1 text-[#3c3c3c]">
            <Icon name="part" className="mr-2 size-[23px]" />
            起落架.PRT
          </li>
          {features.map(([icon, label, open]) => (
            <li
              key={label}
              className={`flex h-8 items-center pl-[13px] ${hiddenIcons.includes(icon) ? "text-[#c2c2c2]" : "text-[#3c3c3c]"}`}
            >
              <svg viewBox="0 0 11 12" className="mr-[10px] h-3 w-[11px] shrink-0" aria-hidden="true">
                {open && <path d="M0 0v12l11-6z" fill="#7f7f7f" />}
              </svg>
              <Icon name={icon} className="mr-[7px] size-6" />
              {label}
            </li>
          ))}
        </ul>
        <div className="flex w-[22px] flex-col border-x border-[#d2d4d6] bg-[#dfe1e2]">
          <div className="flex h-[22px] shrink-0 items-center justify-center bg-[#f6f6f6]">
            <svg viewBox="0 0 10 6" className="h-[6px] w-[10px]" aria-hidden="true">
              <path d="M0 6h10L5 0z" fill="#999" />
            </svg>
          </div>
          <div className="h-[47%] border border-x-0 border-[#b9bbbd] bg-[#f8f8f8]" />
          <div className="mt-auto flex h-[22px] shrink-0 items-center justify-center border-y border-[#d2d4d6] bg-[#f6f6f6]">
            <Caret className="text-[#999]" />
          </div>
        </div>
      </div>
    </div>
  </aside>
);

const viewTools: [string, boolean?][] = [
  ["zoomFit"],
  ["zoomIn"],
  ["zoomOut"],
  ["repaint"],
  ["shading", true],
  ["saved", true],
  ["viewMgr", true],
  ["snapshot"],
  ["perspective"],
  ["datums", true],
];

const ViewToolbar = () => (
  <div className="absolute top-[7px] left-1/2 flex h-[45px] -translate-x-1/2 items-center border border-[#a0a0a0] bg-[#f8f8f8] pr-[6px] pl-[3px]">
    {viewTools.map(([name, menu]) => (
      <button key={name} className={`relative flex h-9 items-center justify-center ${menu ? "w-[39px]" : "w-[38px]"}`}>
        <Icon name={name} />
        {menu && (
          <svg viewBox="0 0 5 5" className="absolute right-1 bottom-1 size-[5px]" aria-hidden="true">
            <path d="M5 0v5H0z" fill="#555" />
          </svg>
        )}
      </button>
    ))}
    <button className="ml-[2px] flex size-[35px] items-center justify-center border border-[#b0b2b4] bg-[#dfe1e3]">
      <Icon name="annot" />
    </button>
    <button className="ml-[3px] flex size-[35px] items-center justify-center border border-[#b0b2b4] bg-[#dfe1e3]">
      <Icon name="spin" />
    </button>
  </div>
);

const FrontFrame = () => (
  <g transform="translate(510 483) scale(.33333)" strokeLinejoin="round">
    {/* loop and long lower rail */}
    <path
      d="M62 235V190C64 150 100 92 155 90L185 91 325 112Q360 117 380 133L457 190 460 200V243Q440 257 418 264L410 260 345 205Q330 195 305 191L180 172Q130 168 115 185L150 735Q165 785 215 803L375 826Q410 832 440 852L885 1200 840 1275 770 1215 390 918Q375 910 360 907L215 886Q110 850 103 780z"
      fill="#8c98a7"
      stroke="#6a7481"
      strokeWidth="3"
    />
    <path d="M93 215Q95 195 115 185L150 735Q165 785 215 803L205 825Q140 805 129 745z" fill="#575e69" />
    <path d="M140 770Q155 800 200 822L213 804Q172 788 157 758z" fill="#6f7986" />
    <path d="M82 160Q110 93 155 91L185 92 325 113Q360 118 380 134L456 191 415 207 345 155Q330 145 305 140L150 118Q110 120 82 160z" fill="#9ba7b7" />
    <path d="M192 820 213 804 375 827Q410 833 440 853L885 1202 860 1240 770 1165 400 872Q378 856 355 852L205 830z" fill="#9ba7b7" />
    <path d="M68 215Q76 123 150 118L305 140Q330 145 345 155L413 208" fill="none" stroke="#b1bed0" strokeWidth="7" />
    <path d="M150 118 325 143" stroke="url(#shineH)" strokeWidth="5" />
    <path d="M96 220 128 745Q140 810 205 830L355 852Q378 856 400 872L775 1168" fill="none" stroke="#a6b3c4" strokeWidth="9" />
    <path d="M185 826 380 856" stroke="url(#shineH)" strokeWidth="5" />
    <path d="M416 210 457 193 460 243 418 262z" fill="#69707d" />
    <path d="M413 208V260" stroke="#98a4b4" strokeWidth="6" />
    {/* near post */}
    <path
      d="M745 477 770 465 795 458 840 492Q852 505 853 530V575Q845 595 825 618 802 650 800 705L834 1165 885 1202Q903 1215 903 1235L907 1285Q900 1312 862 1346L815 1343Q785 1335 780 1290L765 1110 737 720V680Q740 610 778 548L745 522z"
      fill="#8c98a7"
      stroke="#6a7481"
      strokeWidth="3"
    />
    <path d="M750 472 795 459 840 493Q852 508 845 535 800 600 796 700H742Q745 610 778 550 800 520 785 505z" fill="#9ba7b7" />
    <path d="M741 570H798V700H741z" fill="url(#shine)" />
    <path d="M853 525V575Q800 640 800 705L843 1280 830 1285 794 700Q795 620 825 570 850 550 853 525z" fill="#575e69" />
    <path d="M837 1170 885 1204Q900 1215 900 1235L862 1292Q848 1296 841 1280z" fill="#9ba7b7" />
    <path d="M903 1235 907 1285Q900 1312 862 1346L832 1344 830 1285Q850 1302 864 1292 885 1270 903 1235z" fill="#575e69" />
    <path d="M841 1210 850 1225 838 1250z" fill="#7a8593" />
    <path d="M748 475 785 502Q800 520 785 545" fill="none" stroke="#aebbcd" strokeWidth="8" />
    <path d="M741 720 782 1290" stroke="#97a3b3" strokeWidth="6" />
  </g>
);

const BackFrame = () => (
  <g transform="translate(830 373) scale(.33333)" strokeLinejoin="round">
    <path d="M122 240H188L218 700 220 890H155V700z" fill="#84909e" stroke="#6a7481" strokeWidth="3" />
    <path d="M176 240H188L218 700V890H206L210 700z" fill="#5c6470" />
    {/* lower rail, right post and upper arm */}
    <path
      d="M153 850 152 920Q155 945 190 970L690 1288Q730 1310 790 1310H840Q940 1290 950 1200L912 620Q905 530 800 513H715Q690 508 670 495L640 474 605 485 593 497V545L640 578Q680 597 730 597L815 595Q870 602 880 650L915 1185Q905 1220 860 1227H765Q740 1225 720 1212L218 889 206 875V850z"
      fill="#8a96a5"
      stroke="#6a7481"
      strokeWidth="3"
    />
    <path d="M206 875 218 889 720 1212Q740 1226 765 1228H860Q905 1220 915 1187L925 1200Q910 1255 850 1257H770Q715 1258 680 1232L200 925 162 885V850H206z" fill="#9ba7b7" />
    <path d="M157 690H209L211 790 205 878 162 885 157 850z" fill="#9ba7b7" />
    <path d="M160 690H210V790H160z" fill="url(#postShade)" />
    <path d="M125 245 157 700V880" fill="none" stroke="#9aa8b9" strokeWidth="7" />
    <path d="M605 486 640 475 670 496Q690 509 715 514H800Q880 530 905 600 870 545 800 543H715Q680 545 640 522L598 494z" fill="#9ba7b7" />
    <path d="M902 585Q912 600 912 630L950 1195Q945 1250 895 1290 930 1240 932 1190L897 640z" fill="#596270" />
    <path d="M880 650 915 1187 930 1190 895 620z" fill="#8f9bab" />
    <path d="M157 870Q160 905 200 928L680 1235Q715 1258 770 1258H850Q910 1250 930 1195" fill="none" stroke="#aebbcd" strokeWidth="10" />
    <path d="M700 1251 770 1258H850L900 1240" fill="none" stroke="url(#shineH)" strokeWidth="5" />
    <path d="M598 497 640 525Q680 545 715 542H800Q865 550 895 600" fill="none" stroke="#aab7c8" strokeWidth="8" />
    <path d="M670 541Q720 543 790 542.500" fill="none" stroke="url(#shineH)" strokeWidth="5" />
    {/* stub on the back post */}
    <path
      d="M105 85Q105 65 120 63H155Q170 65 170 90L178 180 255 230 260 240V285Q240 298 215 302L130 247Q100 225 100 205z"
      fill="#8a96a5"
      stroke="#6a7481"
      strokeWidth="3"
    />
    <path d="M110 80Q110 66 122 65H155L157 160Q165 175 178 181L252 231 212 248 120 185Q106 175 106 150z" fill="#9ba7b7" />
    <path d="M157 68Q170 70 170 90L178 178 157 163z" fill="#5c6470" />
    <path d="M105 150Q106 180 130 195L212 248" fill="none" stroke="#aebbcd" strokeWidth="8" />
    <path d="M217 252 258 236 260 284 218 299z" fill="#69707d" />
    <path d="M213 250V298" stroke="#98a4b4" strokeWidth="5" />
  </g>
);

const Viewport = () => (
  <main className="relative min-w-0 flex-1 bg-[#e8e9ed]">
    <svg viewBox="0 0 1933 1215" className="absolute inset-0 size-full" aria-hidden="true">
      <BackFrame />
      <FrontFrame />
      <g strokeWidth="1.2" fill="none">
        <path d="M807.500 624 805 593" stroke="#2df52d" />
        <path d="M807.500 624 837 613" stroke="#ff3030" />
        <path d="M807.500 624 827 638" stroke="#30ffff" />
      </g>
      <circle cx="805" cy="593" r="2.5" fill="#2df52d" />
      <circle cx="837" cy="613" r="2.5" fill="#ff3030" />
      <circle cx="827" cy="638" r="3" fill="#30ffff" />
    </svg>
    <ViewToolbar />
  </main>
);

const StatusBar = () => (
  <footer className="flex h-[49px] shrink-0 border-t-2 border-[#999b9d] bg-[#eeeff1]">
    <div className="flex flex-1 items-start border-t-4 border-[#dddfe0]">
      <button className="mt-[6px] ml-[9px] flex size-8 items-center justify-end border border-[#a9abad] bg-[#dfe1e3] pr-[1px]" aria-label="模型树">
        <Icon name="modelTree" />
      </button>
      <Icon name="globe" className="mt-[10px] ml-[10px] size-6" />
      <Icon name="pane" className="mt-[10px] ml-[14px] size-6" />
      <span className="mt-[6px] ml-[17px] h-8 w-px bg-[#b5b7b9]" />
      <span className="ml-auto h-[38px] w-[61px] border-l border-[#b5b7b9]" />
      <div className="flex h-[38px] w-[71px] items-center justify-center border-x border-[#b5b7b9]">
        <button className="flex h-9 w-[42px] items-center justify-center border border-[#c2c6c9] bg-[#fbfbfb]" aria-label="查找">
          <Icon name="binoculars" />
        </button>
        <button className="flex h-9 w-[21px] items-center justify-center border border-l-0 border-[#c2c6c9] bg-[#fbfbfb]" aria-label="查找选项">
          <Caret />
        </button>
      </div>
      <div className="relative mt-[3px] ml-[142px] h-[34px] w-[259px]">
        <select aria-label="选择过滤器" className="size-full appearance-none border border-[#a9abad] bg-[#f8f8f8] px-[9px] text-[#3c3c3c]">
          <option>几何</option>
        </select>
        <span className="pointer-events-none absolute inset-y-0 right-0 flex w-6 items-center justify-center border-l border-[#a9abad]">
          <Caret />
        </span>
      </div>
      <svg viewBox="0 0 18 18" className="mt-[22px] mr-[2px] ml-[5px] size-[18px]" aria-hidden="true">
        <path d="M1 18 18 1M7 18 18 7M13 18l5-5" stroke="#bbb" strokeWidth="2" />
      </svg>
    </div>
  </footer>
);

export default function App() {
  return (
    <div className="flex h-screen flex-col overflow-hidden border-t-[6px] border-l-[6px] border-[#a0a0a0] font-['Noto_Sans','Noto_Sans_CJK_SC',sans-serif] text-[18px] leading-6">
      <Gradients />
      <TitleBar />
      <TabBar />
      <Ribbon />
      <div className="flex min-h-0 flex-1">
        <Sidebar />
        <Viewport />
      </div>
      <StatusBar />
    </div>
  );
}
